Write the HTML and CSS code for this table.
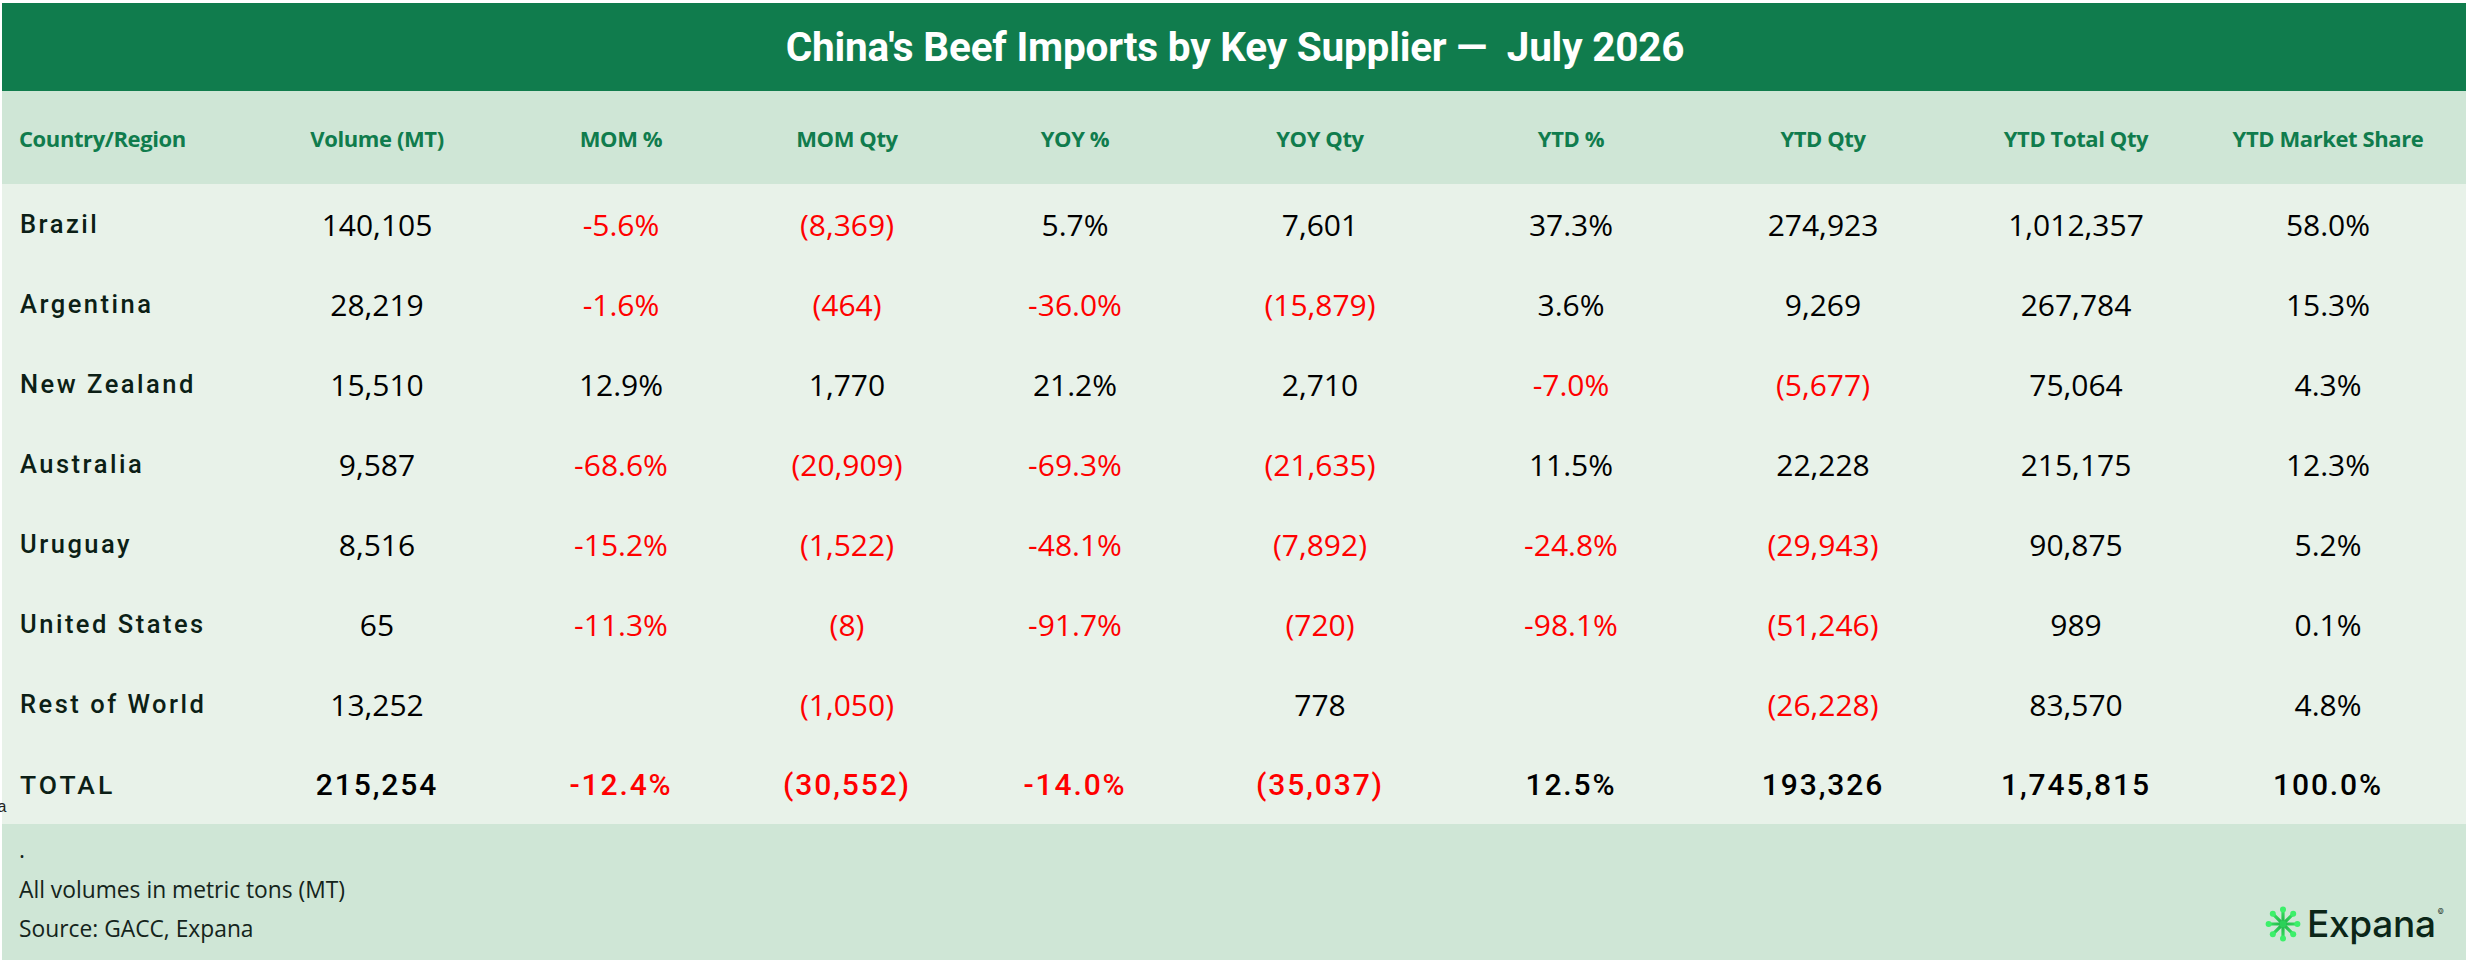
FILE: index.html
```html
<!DOCTYPE html>
<html lang="en">
<head>
<meta charset="utf-8">
<title>China's Beef Imports by Key Supplier</title>
<link rel="stylesheet" href="styles.css">
</head>
<body>
<div class="sheet">
  <div class="title">China's Beef Imports by Key Supplier —&nbsp; July 2026</div>

  <div class="row head">
    <div class="cell name">Country/Region</div>
    <div class="cell">Volume (MT)</div>
    <div class="cell">MOM %</div>
    <div class="cell">MOM Qty</div>
    <div class="cell">YOY %</div>
    <div class="cell">YOY Qty</div>
    <div class="cell">YTD %</div>
    <div class="cell">YTD Qty</div>
    <div class="cell">YTD Total Qty</div>
    <div class="cell">YTD Market Share</div>
  </div>

  <div class="data">
    <div class="row">
      <div class="cell name">Brazil</div>
      <div class="cell">140,105</div>
      <div class="cell neg">-5.6%</div>
      <div class="cell neg">(8,369)</div>
      <div class="cell">5.7%</div>
      <div class="cell">7,601</div>
      <div class="cell">37.3%</div>
      <div class="cell">274,923</div>
      <div class="cell">1,012,357</div>
      <div class="cell">58.0%</div>
    </div>
    <div class="row">
      <div class="cell name">Argentina</div>
      <div class="cell">28,219</div>
      <div class="cell neg">-1.6%</div>
      <div class="cell neg">(464)</div>
      <div class="cell neg">-36.0%</div>
      <div class="cell neg">(15,879)</div>
      <div class="cell">3.6%</div>
      <div class="cell">9,269</div>
      <div class="cell">267,784</div>
      <div class="cell">15.3%</div>
    </div>
    <div class="row">
      <div class="cell name">New Zealand</div>
      <div class="cell">15,510</div>
      <div class="cell">12.9%</div>
      <div class="cell">1,770</div>
      <div class="cell">21.2%</div>
      <div class="cell">2,710</div>
      <div class="cell neg">-7.0%</div>
      <div class="cell neg">(5,677)</div>
      <div class="cell">75,064</div>
      <div class="cell">4.3%</div>
    </div>
    <div class="row">
      <div class="cell name">Australia</div>
      <div class="cell">9,587</div>
      <div class="cell neg">-68.6%</div>
      <div class="cell neg">(20,909)</div>
      <div class="cell neg">-69.3%</div>
      <div class="cell neg">(21,635)</div>
      <div class="cell">11.5%</div>
      <div class="cell">22,228</div>
      <div class="cell">215,175</div>
      <div class="cell">12.3%</div>
    </div>
    <div class="row">
      <div class="cell name">Uruguay</div>
      <div class="cell">8,516</div>
      <div class="cell neg">-15.2%</div>
      <div class="cell neg">(1,522)</div>
      <div class="cell neg">-48.1%</div>
      <div class="cell neg">(7,892)</div>
      <div class="cell neg">-24.8%</div>
      <div class="cell neg">(29,943)</div>
      <div class="cell">90,875</div>
      <div class="cell">5.2%</div>
    </div>
    <div class="row">
      <div class="cell name">United States</div>
      <div class="cell">65</div>
      <div class="cell neg">-11.3%</div>
      <div class="cell neg">(8)</div>
      <div class="cell neg">-91.7%</div>
      <div class="cell neg">(720)</div>
      <div class="cell neg">-98.1%</div>
      <div class="cell neg">(51,246)</div>
      <div class="cell">989</div>
      <div class="cell">0.1%</div>
    </div>
    <div class="row">
      <div class="cell name">Rest of World</div>
      <div class="cell">13,252</div>
      <div class="cell"></div>
      <div class="cell neg">(1,050)</div>
      <div class="cell"></div>
      <div class="cell">778</div>
      <div class="cell"></div>
      <div class="cell neg">(26,228)</div>
      <div class="cell">83,570</div>
      <div class="cell">4.8%</div>
    </div>
    <div class="row total">
      <div class="cell name">TOTAL</div>
      <div class="cell">215,254</div>
      <div class="cell neg">-12.4%</div>
      <div class="cell neg">(30,552)</div>
      <div class="cell neg">-14.0%</div>
      <div class="cell neg">(35,037)</div>
      <div class="cell">12.5%</div>
      <div class="cell">193,326</div>
      <div class="cell">1,745,815</div>
      <div class="cell">100.0%</div>
    </div>
    <span class="stray">ta</span>
  </div>

  <div class="footer">
    <div class="notes">
      <div class="note">.</div>
      <div class="note">All volumes in metric tons (MT)</div>
      <div class="note">Source: GACC, Expana</div>
    </div>
    <div class="logo">
      <svg class="mark" viewBox="0 0 36 36" width="36" height="36" aria-hidden="true">
        <defs>
          <radialGradient id="g" cx="18" cy="18" r="18" gradientUnits="userSpaceOnUse">
            <stop offset="0" stop-color="#1fae45"/>
            <stop offset="1" stop-color="#3cf06a"/>
          </radialGradient>
        </defs>
        <g stroke="url(#g)" stroke-width="3.2" stroke-linecap="round">
          <line x1="18" y1="18" x2="18" y2="4"/>
          <line x1="18" y1="18" x2="18" y2="32"/>
          <line x1="18" y1="18" x2="4" y2="18"/>
          <line x1="18" y1="18" x2="32" y2="18"/>
          <line x1="18" y1="18" x2="8.1" y2="8.1"/>
          <line x1="18" y1="18" x2="27.9" y2="27.9"/>
          <line x1="18" y1="18" x2="27.9" y2="8.1"/>
          <line x1="18" y1="18" x2="8.1" y2="27.9"/>
        </g>
        <g fill="#3cf06a">
          <circle cx="18" cy="3.6" r="3"/>
          <circle cx="18" cy="32.4" r="3"/>
          <circle cx="3.6" cy="18" r="3"/>
          <circle cx="32.4" cy="18" r="3"/>
          <circle cx="7.8" cy="7.8" r="3"/>
          <circle cx="28.2" cy="28.2" r="3"/>
          <circle cx="28.2" cy="7.8" r="3"/>
          <circle cx="7.8" cy="28.2" r="3"/>
        </g>
        <circle cx="18" cy="18" r="3.4" fill="#2bd158"/>
      </svg>
      <span class="word">Expana</span><span class="reg">©</span>
    </div>
  </div>
</div>
</body>
</html>
```
FILE: styles.css
```css
html, body {
  margin: 0;
  padding: 0;
  background: #ffffff;
}

.sheet {
  margin: 3px 2px 0 2px;
  width: 2464px;
  display: flex;
  flex-direction: column;
}

.title {
  height: 88px;
  background: #107c4d;
  color: #ffffff;
  font-family: "Roboto", "Liberation Sans", sans-serif;
  font-weight: 700;
  font-size: 40.5px;
  letter-spacing: -0.2px;
  display: flex;
  align-items: center;
  justify-content: center;
  padding-left: 2px;
}

.row {
  display: grid;
  grid-template-columns: 248px 254px 234px 218px 238px 252px 250px 254px 252px 252px 12px;
  align-items: center;
  height: 80px;
}

.cell {
  text-align: center;
  white-space: nowrap;
}

.cell.name {
  text-align: left;
  padding-left: 18px;
}

.head {
  height: 93px;
  background: #cfe6d6;
  color: #107c4d;
  font-family: "Open Sans", "Liberation Sans", sans-serif;
  font-weight: 700;
  font-size: 22px;
  font-stretch: 94%;
  letter-spacing: -0.4px;
}

.head .cell.name {
  padding-left: 17px;
}

.data {
  position: relative;
  background: #e8f2e9;
  font-family: "Open Sans", "Liberation Sans", sans-serif;
  font-weight: 400;
  font-size: 30px;
  font-stretch: 92%;
  color: #000000;
}

.data .cell.name {
  font-family: "Roboto", "Liberation Sans", sans-serif;
  font-stretch: normal;
  font-weight: 500;
  font-size: 25.5px;
  letter-spacing: 2.5px;
  color: #0c1f16;
}

.neg {
  color: #ff0000;
}

.total .cell {
  font-family: "Roboto", "Liberation Sans", sans-serif;
  font-stretch: normal;
  font-weight: 500;
  font-size: 30px;
  letter-spacing: 1.9px;
}

.total .cell.name {
  font-size: 26.5px;
  letter-spacing: 3px;
}

.stray {
  position: absolute;
  left: -9px;
  top: 614px;
  font-family: "Liberation Sans", sans-serif;
  font-size: 16px;
  color: #222;
}

.footer {
  height: 136px;
  background: #cfe6d6;
  display: flex;
  justify-content: space-between;
  align-items: flex-end;
  padding: 6px 22px 0 17px;
  box-sizing: border-box;
}

.notes {
  align-self: flex-start;
  font-family: "Open Sans", "Liberation Sans", sans-serif;
  font-size: 22.8px;
  color: #14241b;
}

.note {
  height: 39.5px;
  line-height: 39.5px;
}

.logo {
  display: flex;
  align-items: center;
  gap: 6px;
  margin-bottom: 18px;
}

.mark {
  display: block;
}

.word {
  font-family: "Inter", "Liberation Sans", sans-serif;
  font-weight: 500;
  font-size: 37px;
  letter-spacing: -0.3px;
  color: #0b2618;
  line-height: 1;
}

.reg {
  align-self: flex-start;
  font-family: "Inter", sans-serif;
  font-size: 7px;
  color: #0b2618;
  margin-left: -4px;
  margin-top: 2px;
}
```
